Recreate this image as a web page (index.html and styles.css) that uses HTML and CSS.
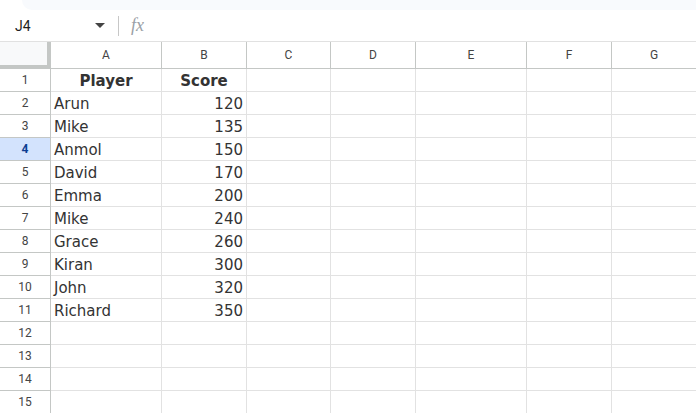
FILE: index.html
```html
<!DOCTYPE html>
<html lang="en">
<head>
    <meta charset="UTF-8">
    <title>Sheet</title>
    <link rel="stylesheet" href="styles.css">
</head>
<body>
    <div class="topband"></div>
    <div class="formula-bar">
        <div class="namebox">J4</div>
        <svg class="caret" width="10" height="6" viewBox="0 0 10 6"><path d="M0 0 L10 0 L5 5 Z" fill="#444"/></svg>
        <div class="sep"></div>
        <div class="fx">fx</div>
    </div>
    <div class="grid" id="grid"></div>
    <script>
        const cols = ['A', 'B', 'C', 'D', 'E', 'F', 'G'];
        const data = [
            ['Player', 'Score'],
            ['Arun', 120], ['Mike', 135], ['Anmol', 150], ['David', 170],
            ['Emma', 200], ['Mike', 240], ['Grace', 260], ['Kiran', 300],
            ['John', 320], ['Richard', 350]
        ];
        const grid = document.getElementById('grid');
        let html = '<div class="corner"></div>';
        cols.forEach(c => { html += `<div class="colhead">${c}</div>`; });
        for (let r = 1; r <= 15; r++) {
            const sel = r === 4 ? ' selected' : '';
            html += `<div class="rowhead${sel}">${r}</div>`;
            const row = data[r - 1] || [];
            cols.forEach((c, i) => {
                let v = row[i];
                let cls = 'cell';
                if (v === undefined) v = '';
                if (r === 1 && v !== '') cls += ' bold';
                else if (typeof v === 'number') cls += ' num';
                html += `<div class="${cls}">${v}</div>`;
            });
        }
        grid.innerHTML = html;
    </script>
</body>
</html>
```

FILE: styles.css
```css
body {
    margin: 0;
    background: #fff;
    font-family: Roboto, Arial, sans-serif;
    overflow: hidden;
}
.topband {
    height: 10px;
    margin-left: 22px;
    background: #f8fafd;
    border-bottom-left-radius: 14px;
}
.formula-bar {
    height: 31px;
    display: flex;
    align-items: center;
    border-bottom: 1px solid #e1e1e1;
}
.namebox {
    width: 80px;
    padding-left: 15px;
    font-size: 14px;
    color: #1f1f1f;
}
.sep {
    width: 1px;
    height: 20px;
    background: #c7c7c7;
    margin-left: 13px;
}
.fx {
    margin-left: 12px;
    font-family: "Liberation Serif", serif;
    font-style: italic;
    font-size: 18px;
    color: #9aa0a6;
}
.grid {
    display: grid;
    grid-template-columns: 51px 111px 85px 84px 85px 111px 85px 85px;
    grid-template-rows: 27px;
    grid-auto-rows: 23px;
}
.grid > div {
    box-sizing: border-box;
    border-right: 1px solid #e2e2e2;
    border-bottom: 1px solid #e2e2e2;
    white-space: nowrap;
    overflow: hidden;
}
.corner {
    background: #f8f9fa;
    border-right: 4px solid #c4c7c5 !important;
    border-bottom: 4px solid #c4c7c5 !important;
}
.colhead,
.rowhead {
    display: flex;
    align-items: center;
    justify-content: center;
    font-size: 12px;
    color: #444;
    border-right-color: #c4c7c5 !important;
    border-bottom-color: #c4c7c5 !important;
}
.rowhead.selected {
    background: #d3e3fd;
    color: #0b3d91;
    font-weight: bold;
}
.cell {
    font-family: "DejaVu Sans", Verdana, sans-serif;
    font-size: 15px;
    color: #333;
    padding: 1px 3px 0;
    line-height: 22px;
}
.cell.bold {
    font-weight: bold;
    text-align: center;
}
.cell.num {
    text-align: right;
}
```
